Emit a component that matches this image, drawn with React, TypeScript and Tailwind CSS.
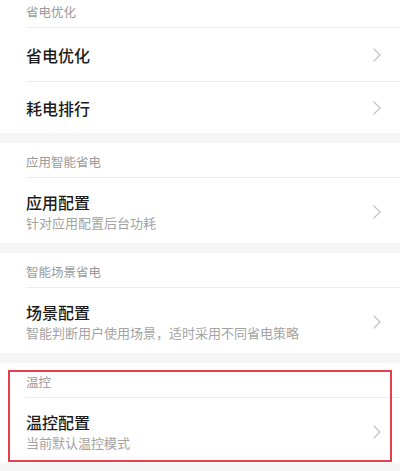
import React from "react"

type Row = { title: string; sub?: string }
type Section = { header: string; rows: Row[]; marked?: boolean }

const SECTIONS: Section[] = [
    { header: "省电优化", rows: [{ title: "省电优化" }, { title: "耗电排行" }] },
    { header: "应用智能省电", rows: [{ title: "应用配置", sub: "针对应用配置后台功耗" }] },
    { header: "智能场景省电", rows: [{ title: "场景配置", sub: "智能判断用户使用场景，适时采用不同省电策略" }] },
    { header: "温控", rows: [{ title: "温控配置", sub: "当前默认温控模式" }], marked: true },
]

function Chevron() {
    return (
        <svg width="8" height="14" viewBox="0 0 8 14" fill="none" className="shrink-0">
            <path d="M1 1 L7 7 L1 13" stroke="#c2c2c2" strokeWidth="1.2" strokeLinecap="round" strokeLinejoin="round" />
        </svg>
    )
}

export default function App() {
    return (
        <div
            className="w-[400px] h-[471px] overflow-hidden bg-[#f5f5f5]"
            style={{ fontFamily: '"Noto Sans CJK SC", "Noto Sans", sans-serif' }}
        >
            <div className="-mt-[7px] flex flex-col gap-[10px]">
                {SECTIONS.map((section) => (
                    <div key={section.header} className="relative bg-white">
                        {/* Section header */}
                        <div className="ml-[26px] h-[35px] pt-[4px] flex items-center border-b border-[#ededed] text-[12.5px] text-[#9a9a9a]">
                            {section.header}
                        </div>

                        {section.rows.map((row, i) => {
                            const last = i === section.rows.length - 1
                            return (
                                <div
                                    key={row.title}
                                    className={
                                        "ml-[26px] pr-[19px] flex items-center justify-between " +
                                        (row.sub ? "h-[65px] pt-[2px] " : last ? "h-[51px] " : "h-[54px] border-b border-[#ededed] ")
                                    }
                                >
                                    <div className="flex flex-col">
                                        <span className="text-[16px] leading-[22px] font-medium text-[#1c1c1c]">{row.title}</span>
                                        {row.sub && (
                                            <span className="text-[13px] leading-[20px] text-[#a3a3a3]">{row.sub}</span>
                                        )}
                                    </div>
                                    <Chevron />
                                </div>
                            )
                        })}

                        {/* Red annotation box */}
                        {section.marked && (
                            <div className="absolute top-[7px] left-[8px] right-[8px] h-[92px] border-2 border-[#e5404a] pointer-events-none" />
                        )}
                    </div>
                ))}
            </div>
        </div>
    )
}
